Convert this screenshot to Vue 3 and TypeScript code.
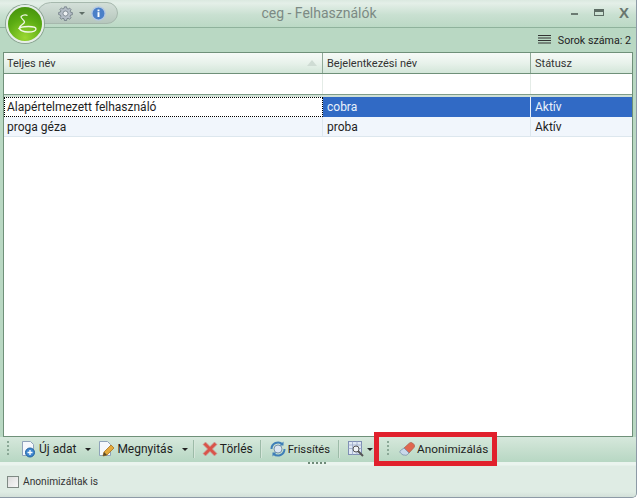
<script setup lang="ts">
interface UserRow {
  name: string;
  login: string;
  status: string;
  selected?: boolean;
}

const rows: UserRow[] = [
  { name: 'Alapértelmezett felhasználó', login: 'cobra', status: 'Aktív', selected: true },
  { name: 'proga géza', login: 'proba', status: 'Aktív' },
];
</script>

<template>
  <div class="window">
    <!-- title bar -->
    <header class="titlebar">
      <div class="quick">
        <svg class="gear" width="15" height="15" viewBox="0 0 18 18">
          <path d="M7.700 1h2.600l.4 2.100 1.500.6 1.700-1.200 1.800 1.800-1.200 1.700.6 1.500 2.100.4v2.600l-2.100.4-.6 1.500 1.200 1.700-1.800 1.800-1.700-1.200-1.500.6-.4 2.100H7.700l-.4-2.100-1.500-.6-1.700 1.200-1.800-1.800 1.200-1.700-.6-1.500L.8 10.300V7.700l2.100-.4.6-1.500-1.200-1.700 1.800-1.800 1.700 1.200 1.500-.6z" fill="#b4bdc6" stroke="#5f6b76" stroke-width=".8" />
          <circle cx="9" cy="9" r="3" fill="#eef1f3" stroke="#5f6b76" stroke-width=".8" />
        </svg>
        <span class="mini-arrow"></span>
        <svg class="info" width="15" height="15" viewBox="0 0 17 17">
          <circle cx="8.500" cy="8.500" r="7.500" fill="#4a7fc8" stroke="#b4c8e2" stroke-width="1.500" />
          <rect x="7.400" y="7" width="2.200" height="5.500" fill="#fff" />
          <rect x="7.400" y="4" width="2.200" height="2" fill="#fff" />
        </svg>
      </div>
      <div class="orb">
        <svg width="34" height="34" viewBox="2 2 34 34">
          <path d="M15 11.500c2-1.500 5-1.800 6.500-1M15 11.500c-.5 2 3.500 3.500 3.500 5.500 0 2-4.500 3-5 5.500-.5 3 4.500 4.500 8.500 4.500s8-1 8-3-3-2.500-7.500-2.500-9 .5-10 2.500" fill="none" stroke="#f2f8e8" stroke-width="1.300" />
        </svg>
      </div>
      <div class="title">ceg - Felhasználók</div>
      <div class="controls">
        <span class="ctl-min"></span>
        <span class="ctl-max"></span>
        <span class="ctl-close">X</span>
      </div>
    </header>

    <!-- row count strip -->
    <div class="countbar">
      <svg width="13" height="10" viewBox="0 0 13 10">
        <path d="M0 .5h13M0 3h13M0 5.500h13M0 8h13" stroke="#333" stroke-width="1" />
      </svg>
      <span>Sorok száma: 2</span>
    </div>

    <!-- grid -->
    <section class="grid">
      <div class="grid-row grid-head">
        <div class="cell head-cell name-head">
          Teljes név
          <span class="sort"></span>
        </div>
        <div class="cell head-cell">Bejelentkezési név</div>
        <div class="cell head-cell">Státusz</div>
      </div>
      <div class="grid-row filter">
        <div class="cell"></div>
        <div class="cell"></div>
        <div class="cell"></div>
      </div>
      <div class="filter-sep"></div>
      <div
        v-for="row in rows"
        :key="row.login"
        class="grid-row data"
        :class="{ selected: row.selected }"
      >
        <div class="cell first"><span>{{ row.name }}</span></div>
        <div class="cell">{{ row.login }}</div>
        <div class="cell">{{ row.status }}</div>
      </div>
    </section>

    <!-- toolbar -->
    <nav class="toolbar">
      <span class="grip"></span>
      <button class="tool has-arrow">
        <svg width="18" height="18" viewBox="0 0 18 18">
          <path d="M3.500 1.500h8l3 3v11h-11z" fill="#f5f8fc" stroke="#8fa3ba" />
          <circle cx="11" cy="12.500" r="4.500" fill="#3d86cf" stroke="#23639f" />
          <path d="M8.500 12.500h5M11 10v5" stroke="#fff" stroke-width="1.300" />
        </svg>
        Új adat
        <span class="arrow"></span>
      </button>
      <button class="tool has-arrow open">
        <svg width="18" height="18" viewBox="0 0 18 18">
          <path d="M2.500 1.500h8l3 3v11h-11z" fill="#f5f8fc" stroke="#8fa3ba" />
          <path d="M6 16l1-4 7-7 3 3-7 7z" fill="#e4a93a" stroke="#a8741e" stroke-width=".8" />
          <path d="M6 16l1-4 3 3z" fill="#5b4a2a" />
        </svg>
        Megnyitás
        <span class="arrow"></span>
      </button>
      <span class="sep"></span>
      <button class="tool delete">
        <svg width="16" height="16" viewBox="0 0 16 16">
          <path d="M1 3.500L3.500 1 8 5.500 12.500 1 15 3.500 10.500 8l4.500 4.500-2.500 2.500L8 10.500 3.500 15 1 12.500 5.500 8z" fill="#d9544a" stroke="#c9a8a2" stroke-width=".8" />
        </svg>
        Törlés
      </button>
      <span class="sep"></span>
      <button class="tool refresh">
        <svg width="18" height="18" viewBox="0 0 18 18">
          <circle cx="9" cy="9" r="4" fill="#dbe6f2" stroke="#7d94ad" />
          <path d="M2.500 9a6.500 6.500 0 0 1 11-4.700M15.500 9a6.500 6.500 0 0 1-11 4.700" fill="none" stroke="#3f7fb8" stroke-width="2" />
          <path d="M14.500 1.500v4h-4zM3.500 16.500v-4h4z" fill="#3f7fb8" />
        </svg>
        Frissítés
      </button>
      <span class="sep"></span>
      <button class="tool icon-only">
        <svg width="18" height="18" viewBox="0 0 18 18">
          <rect x="1.500" y="1.500" width="13" height="13" fill="#dfe8f4" stroke="#7f8fb4" />
          <path d="M1.500 5h13M1.500 8.500h13M5.500 1.500v13M10 1.500v13" stroke="#9aa8c8" stroke-width=".8" />
          <circle cx="9" cy="9" r="3" fill="#f1f5f8" stroke="#555" />
          <path d="M11 11l5 5" stroke="#555" stroke-width="2" />
        </svg>
        <span class="arrow"></span>
      </button>
      <span class="grip second"></span>
      <button class="tool eraser">
        <svg width="16" height="16" viewBox="0 0 16 16">
          <path d="M5 7l5.500-5c1-.8 2-.8 3 0l1.500 1.500c.8 1 .8 2 0 3L10 12z" fill="#e0664f" stroke="#a3614f" stroke-width=".7" />
          <path d="M5 7l5 5-1.500 1.500c-1 .8-2 1-3 .5H4L1.500 12c-.8-1-.8-1.500 0-2.500z" fill="#c9d8ea" stroke="#6f86a3" stroke-width=".7" />
        </svg>
        Anonimizálás
      </button>
      <span class="splitter"></span>
    </nav>

    <!-- footer -->
    <footer class="footer">
      <label class="check">
        <span class="box"></span>
        Anonimizáltak is
      </label>
    </footer>

    <div class="highlight"></div>
  </div>
</template>

<style>
html,
body {
  margin: 0;
  background: #fff;
}
</style>

<style scoped>
.window {
  position: relative;
  width: 636px;
  height: 497px;
  display: flex;
  flex-direction: column;
  background: #b9d8c3;
  border-right: 1px solid #8d9aa6;
  border-bottom: 1px solid #8d9aa6;
  border-radius: 0 0 5px 0;
  font-family: Roboto, "Noto Sans", sans-serif;
  font-size: 12px;
  color: #1e1e1e;
  overflow: hidden;
}

/* 타이틀바 */
.titlebar {
  position: relative;
  flex: 0 0 28px;
  display: flex;
  align-items: center;
  justify-content: center;
  box-sizing: border-box;
  background: linear-gradient(#dbe9e0, #e4efe8 12%, #c9e0d1 55%, #bbd9c5);
  border-bottom: 1px solid #8fb29c;
}

.quick {
  position: absolute;
  left: 36px;
  top: 2px;
  width: 82px;
  height: 22px;
  display: flex;
  align-items: center;
  gap: 6px;
  box-sizing: border-box;
  padding-left: 21px;
  background: linear-gradient(#d3dfd8, #b6c7bd);
  border: 1px solid #a6b8ad;
  border-radius: 16px 12px 12px 0;
}

.gear,
.info {
  flex: none;
}

.mini-arrow {
  width: 0;
  height: 0;
  border: 3px solid transparent;
  border-top: 3px solid #5e6d66;
  border-bottom: 0;
}

.orb {
  position: absolute;
  left: 6px;
  top: 5px;
  width: 38px;
  height: 38px;
  display: flex;
  align-items: center;
  justify-content: center;
  box-sizing: border-box;
  border-radius: 50%;
  background: radial-gradient(circle at 50% 90%, #9bd832, #5aab12 55%, #3f8a0b);
  border: 2px solid #e6eee8;
  box-shadow: 0 0 0 1px #8ba392;
  z-index: 2;
}

.title {
  font-size: 14px;
  color: #7c8a84;
  margin-top: -1px;
  margin-left: 2px;
}

.controls {
  position: absolute;
  right: 5px;
  top: 4px;
  display: flex;
  align-items: center;
  gap: 15px;
  height: 16px;
}

.ctl-min {
  width: 7px;
  height: 2px;
  margin-top: 4px;
  margin-right: 1px;
  background: #6b7a72;
}

.ctl-max {
  width: 10px;
  height: 7px;
  box-sizing: border-box;
  border: 1px solid #5d6c64;
  border-top-width: 3px;
}

.ctl-close {
  width: 12px;
  font-family: "Liberation Sans", sans-serif;
  font-size: 15px;
  font-weight: 700;
  color: #69766f;
}

.countbar {
  flex: 0 0 24px;
  display: flex;
  align-items: center;
  justify-content: flex-end;
  gap: 7px;
  padding-right: 5px;
  font-size: 10.7px;
}

/* 그리드 */
.grid {
  flex: 0 0 385px;
  margin: 0 3px;
  background: #fff;
  border: 1px solid #6f9079;
  box-sizing: border-box;
}

.grid-row {
  display: grid;
  grid-template-columns: 319px 208px 1fr;
  box-sizing: border-box;
}

.cell {
  box-sizing: border-box;
  padding: 0 3px 0 4px;
  display: flex;
  align-items: center;
  white-space: nowrap;
}

.cell:first-child {
  padding-left: 3px;
}

.grid-head {
  height: 21px;
  font-size: 11px;
  background: linear-gradient(#f6faf7, #e8f2eb 50%, #d3e6d9);
  border-bottom: 1px solid #6f9079;
}

.head-cell {
  border-right: 1px solid #8fa998;
  color: #333;
}

.head-cell:last-child {
  border-right: 0;
}

.name-head {
  justify-content: space-between;
}

.sort {
  width: 0;
  height: 0;
  margin-right: 2px;
  border: 5px solid transparent;
  border-top: 0;
  border-bottom: 6px solid #cfdcd4;
}

.filter {
  height: 20px;
}

.filter .cell {
  border-right: 1px solid #e4ece7;
}

.filter .cell:last-child {
  border-right: 0;
}

.filter-sep {
  height: 3px;
  background: #cfe0d5;
  border-top: 1px solid #7f9c89;
  box-sizing: border-box;
}

.data {
  height: 20px;
  background: #f1f6fc;
  border-bottom: 1px solid #dde7ee;
}

.data .cell {
  border-right: 1px solid #dde7ee;
}

.data .cell:last-child {
  border-right: 0;
}

.data.selected {
  background: #316ac5;
  color: #eaf2fb;
  border-bottom: 0;
}

.data.selected .cell {
  border-right-color: #e8f0fa;
}

.data.selected .cell:last-child {
  border-right: 0;
}

.data.selected .first {
  background: #fff;
  color: #1e1e1e;
  outline: 1px dotted #000;
  outline-offset: -1px;
}

/* 툴바 */
.toolbar {
  position: relative;
  flex: 0 0 25px;
  display: flex;
  align-items: center;
  box-sizing: border-box;
  padding: 0 0 1px 7px;
  background: linear-gradient(#d6e8dc, #c8e0d0 45%, #b7d7c3);
}

.tool {
  display: inline-flex;
  align-items: center;
  gap: 2px;
  height: 22px;
  padding: 0 3px;
  border: 0;
  background: none;
  font: inherit;
  color: inherit;
  white-space: nowrap;
}

.tool svg {
  flex: none;
}

.has-arrow {
  padding-right: 0;
}

.open {
  margin-left: 3px;
}

.delete {
  gap: 2px;
  padding-right: 2px;
}

.refresh {
  gap: 1px;
  font-size: 11.2px;
}

.eraser {
  gap: 2px;
  font-size: 11.8px;
}

.grip {
  flex: none;
  width: 2px;
  height: 16px;
  margin-right: 7px;
  background: repeating-linear-gradient(#8aa896 0 2px, transparent 2px 4px);
}

.grip.second {
  margin-left: 11px;
}

.sep {
  flex: none;
  width: 1px;
  height: 18px;
  margin: 0 5px;
  background: #9dbba8;
  box-shadow: 1px 0 0 #d5e6da;
}

.arrow {
  width: 0;
  height: 0;
  margin-left: 7px;
  border: 3px solid transparent;
  border-top: 3px solid #222;
  border-bottom: 0;
}

.icon-only .arrow {
  margin-left: 0;
}

.splitter {
  position: absolute;
  left: 308px;
  bottom: -2px;
  width: 19px;
  height: 2px;
  z-index: 1;
  background: repeating-linear-gradient(90deg, #6f8a78 0 2px, transparent 2px 4px);
}

.footer {
  flex: 1;
  display: flex;
  align-items: center;
  padding: 4px 0 0 7px;
  background: linear-gradient(#eaf4ee 0 3px, #dfece4 4px, #dfece4 85%, #d3e0d9);
  font-size: 10.2px;
}

.check {
  display: flex;
  align-items: center;
  gap: 4px;
  color: #333;
}

.box {
  width: 10px;
  height: 10px;
  border: 1px solid #7f8a84;
  background: linear-gradient(135deg, #dcdcdc, #f8f8f8);
}

/* 주석용 빨간 테두리 */
.highlight {
  position: absolute;
  left: 374px;
  top: 432px;
  width: 123px;
  height: 34px;
  box-sizing: border-box;
  border: 5px solid #e1202c;
  pointer-events: none;
}
</style>
